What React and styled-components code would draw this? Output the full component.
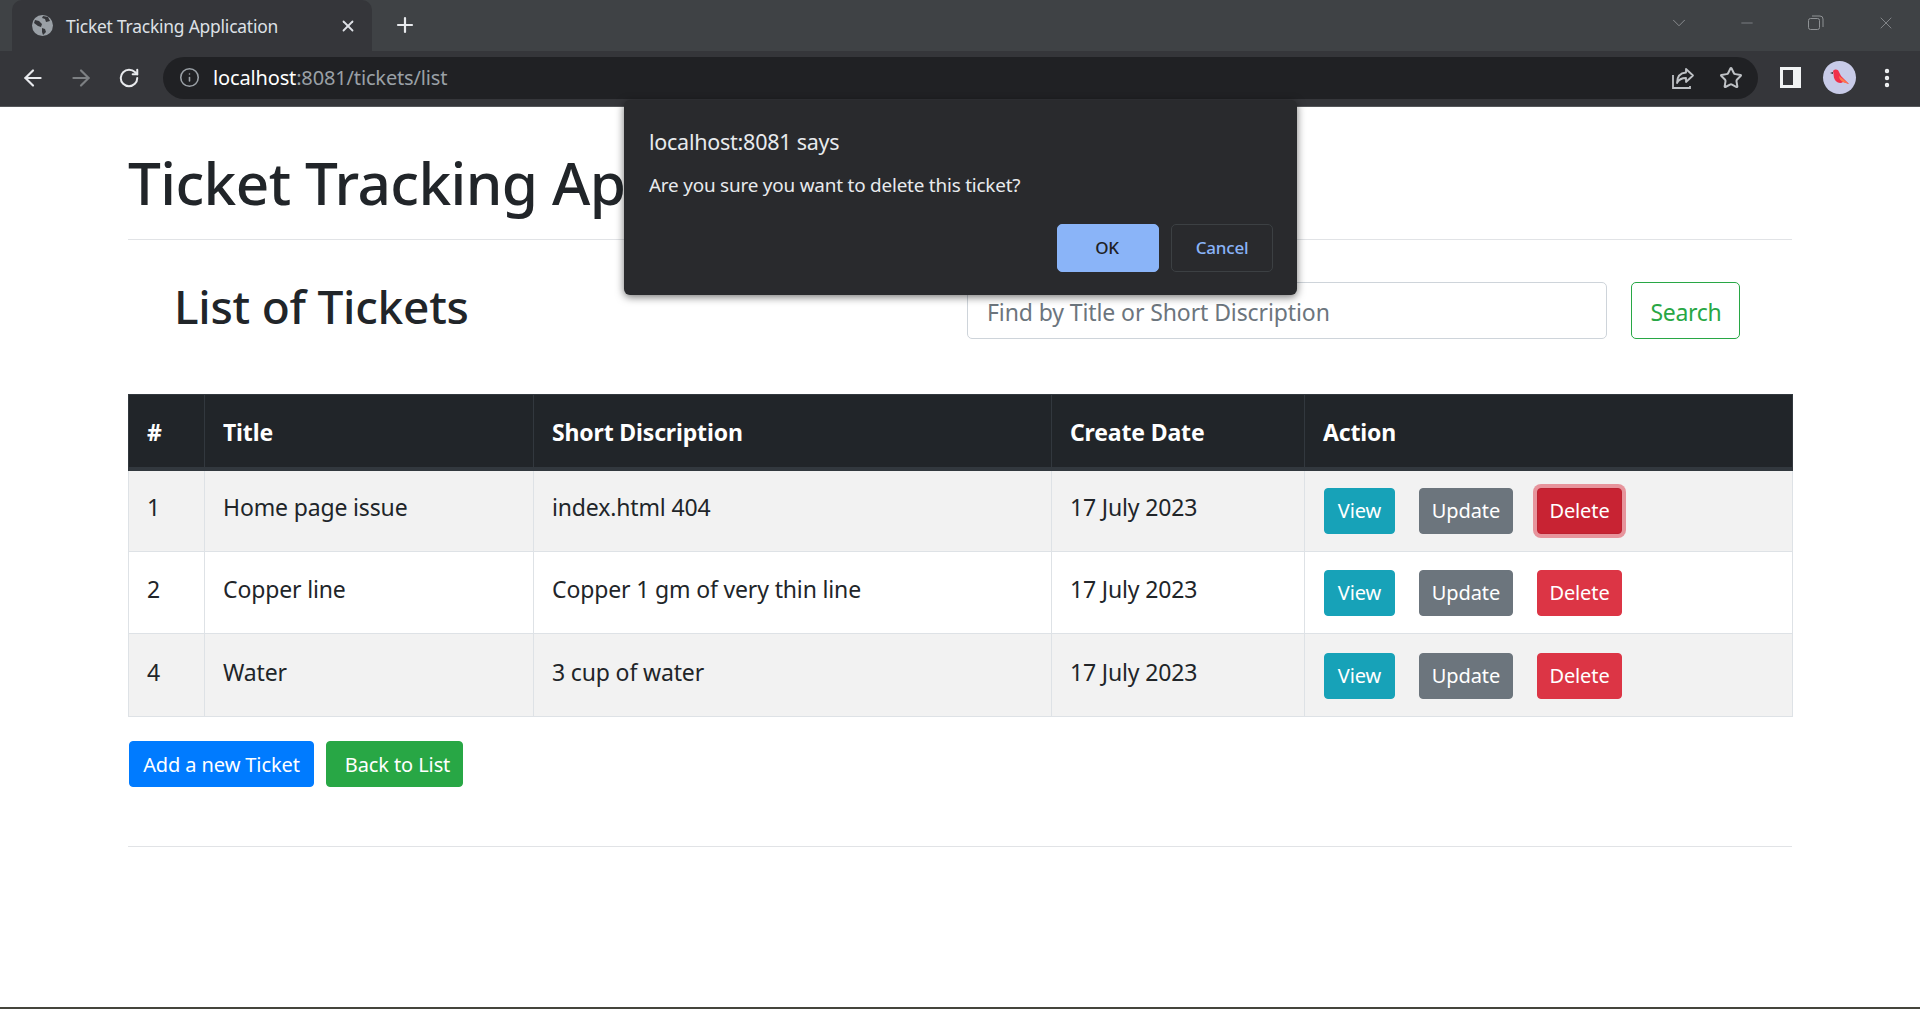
import React from 'react';
import styled, { createGlobalStyle } from 'styled-components';
import { ArrowLeft, ArrowRight, RotateCw, Info, Star, X, Plus, ChevronDown, Minus, MoreVertical } from 'lucide-react';

const GlobalStyle = createGlobalStyle`
  html, body { margin: 0; padding: 0; height: 100%; background: #fff; }
  body { font-family: "Noto Sans", "Open Sans", Arial, sans-serif; color: #212529; overflow: hidden; }
  * { box-sizing: border-box; }
`;

const Shell = styled.div`
  height: 1009px;
  display: flex;
  flex-direction: column;
  position: relative;
  overflow: hidden;
`;

const TabStrip = styled.div`
  height: 51px;
  background: #3f4245;
  display: flex;
  align-items: flex-end;
  padding-left: 12px;
  flex: none;
`;

const Tab = styled.div`
  width: 360px;
  height: 51px;
  background: #35363a;
  border-radius: 10px 10px 0 0;
  display: flex;
  align-items: center;
  padding: 0 15px 0 20px;
  color: #dee1e6;
  font-size: 17.4px;
  letter-spacing: -0.2px;
`;

const TabTitle = styled.span`
  flex: 1;
  margin-left: 13px;
`;

const NewTab = styled.div`
  margin: 0 0 11px 21px;
  height: 30px;
  display: flex;
  align-items: center;
  color: #e8eaed;
`;

const WindowControls = styled.div`
  margin-left: auto;
  align-self: flex-start;
  display: flex;
  align-items: center;
  height: 46px;
  color: #8f9295;
  padding-right: 24px;
  gap: 52px;
`;

const ChevronSlot = styled.div`
  display: flex;
  margin-right: -4px;
`;

const Toolbar = styled.div`
  height: 56px;
  background: #35363a;
  display: flex;
  align-items: center;
  padding: 0 20px 2px 20px;
  flex: none;
  border-bottom: 1px solid #55575a;
`;

const NavButton = styled.div`
  width: 26px;
  height: 26px;
  margin-right: 22px;
  display: flex;
  align-items: center;
  justify-content: center;
  color: ${p => (p.$dim ? '#7d8083' : '#e8eaed')};
`;

const Omnibox = styled.div`
  width: 1595px;
  margin-left: -1px;
  height: 42px;
  background: #202124;
  border-radius: 21px;
  display: flex;
  align-items: center;
  padding: 0 15px 0 16px;
  color: #9aa0a6;
`;

const Url = styled.div`
  margin-left: 13px;
  font-size: 20px;
  flex: 1;
  letter-spacing: -0.15px;
  color: #9aa0a6;
  b { font-weight: 400; color: #fff; }
`;

const OmniIcons = styled.div`
  display: flex;
  align-items: center;
  gap: 24px;
  color: #bfc2c6;
`;

const ToolbarRight = styled.div`
  display: flex;
  align-items: center;
  margin-left: 22px;
`;

const SidePanel = styled.div`
  width: 21px;
  height: 21px;
  background: #f1f3f4;
  position: relative;
  margin-right: 22px;
  &::before {
    content: '';
    position: absolute;
    left: 3px;
    top: 3px;
    width: 10px;
    height: 15px;
    background: #35363a;
  }
`;

const Avatar = styled.div`
  width: 33px;
  height: 33px;
  border-radius: 50%;
  background: #c8cbe8;
  display: flex;
  align-items: center;
  justify-content: center;
  margin-right: 19px;
`;

const Dots = styled.div`
  color: #f1f3f4;
  display: flex;
`;

const Page = styled.main`
  flex: 1;
  padding: 0 128px;
  display: flex;
  flex-direction: column;
`;

const Title = styled.h1`
  margin: 0;
  font-size: 58.5px;
  font-weight: 500;
  line-height: 72px;
  padding: 39px 0 21px;
  letter-spacing: -0.6px;
  border-bottom: 1px solid #e1e3e6;
`;

const ListHeader = styled.div`
  display: flex;
  height: 154px;
  padding-top: 39px;
`;

const Heading = styled.h2`
  margin: 1px 0 0 46px;
  width: 793px;
  font-size: 46px;
  font-weight: 500;
  line-height: 52px;
  letter-spacing: -0.25px;
`;

const SearchInput = styled.input`
  width: 640px;
  height: 57px;
  margin-top: 3px;
  border: 1px solid #ced4da;
  border-radius: 5px;
  padding: 2px 19px 0;
  font: inherit;
  font-size: 23px;
  letter-spacing: -0.1px;
  color: #495057;
  &::placeholder { color: #6c757d; opacity: 1; }
`;

const SearchButton = styled.button`
  width: 109px;
  height: 57px;
  margin: 3px 0 0 24px;
  padding: 2px 0 0 1px;
  background: #fff;
  border: 1px solid #28a745;
  border-radius: 5px;
  color: #28a745;
  font: inherit;
  font-size: 23px;
  letter-spacing: -0.3px;
`;

const Table = styled.table`
  width: 1664px;
  border-collapse: collapse;
  table-layout: fixed;
  font-size: 23px;
  letter-spacing: -0.15px;
`;

const Th = styled.th`
  background: #212529;
  color: #fff;
  height: 74px;
  border: 1px solid #32383e;
  border-bottom: 4px solid #32383e;
  padding: 2px 18px 0;
  text-align: left;
  font-weight: 700;
  width: ${p => p.$w}px;
`;

const Row = styled.tr`
  background: ${p => (p.$striped ? '#f2f2f2' : '#fff')};
`;

const Td = styled.td`
  border: 1px solid #dee2e6;
  padding: ${p => 20 + p.$nudge}px 18px 0;
  height: 82.7px;
  vertical-align: top;
  line-height: 32px;
`;

const ActionCell = styled(Td)`
  padding: ${p => 17 + p.$nudge}px 0 0 19px;
`;

const ActionRow = styled.div`
  display: flex;
  gap: 24px;
`;

const colors = { info: '#17a2b8', secondary: '#6c757d', danger: '#dc3545', primary: '#007bff', success: '#28a745' };

const Btn = styled.button`
  height: 46px;
  width: ${p => p.$w}px;
  padding: 0;
  border: 1px solid ${p => (p.$focus ? '#bd2130' : colors[p.$kind])};
  border-radius: 4px;
  background: ${p => (p.$focus ? '#c82333' : colors[p.$kind])};
  color: #fff;
  font: inherit;
  font-size: 20px;
  letter-spacing: -0.1px;
  box-shadow: ${p => (p.$focus ? '0 0 0 4px rgba(220, 53, 69, 0.5)' : 'none')};
`;

const BackButton = styled(Btn)`
  padding-left: 6px;
`;

const Footer = styled.div`
  display: flex;
  gap: 12px;
  padding: 24px 0 0 1px;
  height: 130px;
  border-bottom: 1px solid #e1e3e6;
`;

const BottomEdge = styled.div`
  height: 2px;
  background: #45453c;
  flex: none;
`;

const Dialog = styled.div`
  position: absolute;
  left: 624px;
  top: 100px;
  width: 673px;
  height: 195px;
  background: #292a2d;
  border-radius: 6px;
  box-shadow: 0 2px 8px rgba(0, 0, 0, 0.55);
  padding: 0 24px 0 25px;
  color: #e8eaed;
  display: flex;
  flex-direction: column;
`;

const DialogTitle = styled.div`
  font-size: 21.5px;
  letter-spacing: -0.25px;
  margin-top: 27px;
  line-height: 30px;
`;

const DialogText = styled.div`
  font-size: 18.9px;
  letter-spacing: -0.2px;
  margin-top: 15px;
  line-height: 26px;
`;

const DialogActions = styled.div`
  display: flex;
  justify-content: flex-end;
  gap: 12px;
  margin-top: auto;
  margin-bottom: 23px;
`;

const DialogBtn = styled.button`
  width: 102px;
  height: 48px;
  padding: 0 ${p => (p.$primary ? '2px' : '0')} 2px 0;
  border-radius: 5px;
  font: inherit;
  font-size: 17px;
  font-weight: 500;
  letter-spacing: -0.2px;
  border: 1px solid ${p => (p.$primary ? '#8ab4f8' : '#3c4043')};
  background: ${p => (p.$primary ? '#8ab4f8' : 'transparent')};
  color: ${p => (p.$primary ? '#202124' : '#8ab4f8')};
`;

const GlobeIcon = () => (
  <svg width="21" height="21" viewBox="0 0 21 21">
    <circle cx="10.5" cy="10.5" r="10.5" fill="#9aa0a6" />
    <path d="M3 5l4 1 3 3-1 3-3-1-4-3zM10 13l3 1 1 3-3 3-1-3zM11 1l5 1 2 4-4 1-1-3-3-1z" fill="#35363a" />
  </svg>
);

const ShareIcon = () => (
  <svg width="24" height="24" viewBox="0 0 24 24" fill="none" stroke="#bfc2c6" strokeWidth="1.8">
    <path d="M2 9v13h17v-2" />
    <path d="M15 3l7 6.5-7 6.5v-4c-4 0-7 1-9 5 0-6 3-10 9-10.500z" strokeLinejoin="round" />
  </svg>
);

const RestoreIcon = () => (
  <svg width="16" height="16" viewBox="0 0 16 16" fill="none" stroke="#8f9295" strokeWidth="1">
    <rect x="0.5" y="3.500" width="11" height="11" rx="2" />
    <path d="M4 1h8a3 3 0 0 1 3 3v8" />
  </svg>
);

const BirdIcon = () => (
  <svg width="26" height="26" viewBox="0 0 26 26">
    <path d="M6 6c2-2 5-2 6 1l2 4 8 8-6-2c-2 2-6 1-8-2-2-3-1-6-2-9z" fill="#f0304a" />
    <path d="M12 11l4 3 6 5-6-2c-2-1-4-3-4-6z" fill="#ff7a4d" />
    <path d="M3 8l3-1v2z" fill="#333" />
  </svg>
);

const tickets = [
  { id: 1, title: 'Home page issue', desc: 'index.html 404', date: '17 July 2023', nudge: 0 },
  { id: 2, title: 'Copper line', desc: 'Copper 1 gm of very thin line', date: '17 July 2023', nudge: 1 },
  { id: 4, title: 'Water', desc: '3 cup of water', date: '17 July 2023', nudge: 2 },
];

export default function App() {
  return (
    <Shell>
      <GlobalStyle />
      <TabStrip>
        <Tab>
          <GlobeIcon />
          <TabTitle>Ticket Tracking Application</TabTitle>
          <X size={18} strokeWidth={2.4} />
        </Tab>
        <NewTab><Plus size={24} strokeWidth={2.2} /></NewTab>
        <WindowControls>
          <ChevronSlot><ChevronDown size={22} strokeWidth={1} /></ChevronSlot>
          <Minus size={18} strokeWidth={1} />
          <RestoreIcon />
          <X size={20} strokeWidth={1} />
        </WindowControls>
      </TabStrip>
      <Toolbar>
        <NavButton><ArrowLeft size={26} strokeWidth={2} /></NavButton>
        <NavButton $dim><ArrowRight size={26} strokeWidth={2} /></NavButton>
        <NavButton><RotateCw size={22} strokeWidth={2.2} /></NavButton>
        <Omnibox>
          <Info size={21} strokeWidth={1.8} />
          <Url><b>localhost</b>:8081/tickets/list</Url>
          <OmniIcons>
            <ShareIcon />
            <Star size={24} strokeWidth={2} />
          </OmniIcons>
        </Omnibox>
        <ToolbarRight>
          <SidePanel />
          <Avatar><BirdIcon /></Avatar>
          <Dots><MoreVertical size={24} strokeWidth={2.4} /></Dots>
        </ToolbarRight>
      </Toolbar>
      <Page>
        <Title>Ticket Tracking Application</Title>
        <ListHeader>
          <Heading>List of Tickets</Heading>
          <SearchInput placeholder="Find by Title or Short Discription" />
          <SearchButton>Search</SearchButton>
        </ListHeader>
        <Table>
          <thead>
            <tr>
              <Th $w={76}>#</Th>
              <Th $w={329}>Title</Th>
              <Th $w={518}>Short Discription</Th>
              <Th $w={253}>Create Date</Th>
              <Th $w={488}>Action</Th>
            </tr>
          </thead>
          <tbody>
            {tickets.map((t, i) => (
              <Row key={t.id} $striped={i % 2 === 0}>
                <Td $nudge={t.nudge}>{t.id}</Td>
                <Td $nudge={t.nudge}>{t.title}</Td>
                <Td $nudge={t.nudge}>{t.desc}</Td>
                <Td $nudge={t.nudge}>{t.date}</Td>
                <ActionCell $nudge={t.nudge}>
                  <ActionRow>
                    <Btn $kind="info" $w={71}>View</Btn>
                    <Btn $kind="secondary" $w={94}>Update</Btn>
                    <Btn $kind="danger" $w={85} $focus={i === 0}>Delete</Btn>
                  </ActionRow>
                </ActionCell>
              </Row>
            ))}
          </tbody>
        </Table>
        <Footer>
          <Btn $kind="primary" $w={185}>Add a new Ticket</Btn>
          <BackButton $kind="success" $w={137}>Back to List</BackButton>
        </Footer>
      </Page>
      <BottomEdge />
      <Dialog>
        <DialogTitle>localhost:8081 says</DialogTitle>
        <DialogText>Are you sure you want to delete this ticket?</DialogText>
        <DialogActions>
          <DialogBtn $primary>OK</DialogBtn>
          <DialogBtn>Cancel</DialogBtn>
        </DialogActions>
      </Dialog>
    </Shell>
  );
}
